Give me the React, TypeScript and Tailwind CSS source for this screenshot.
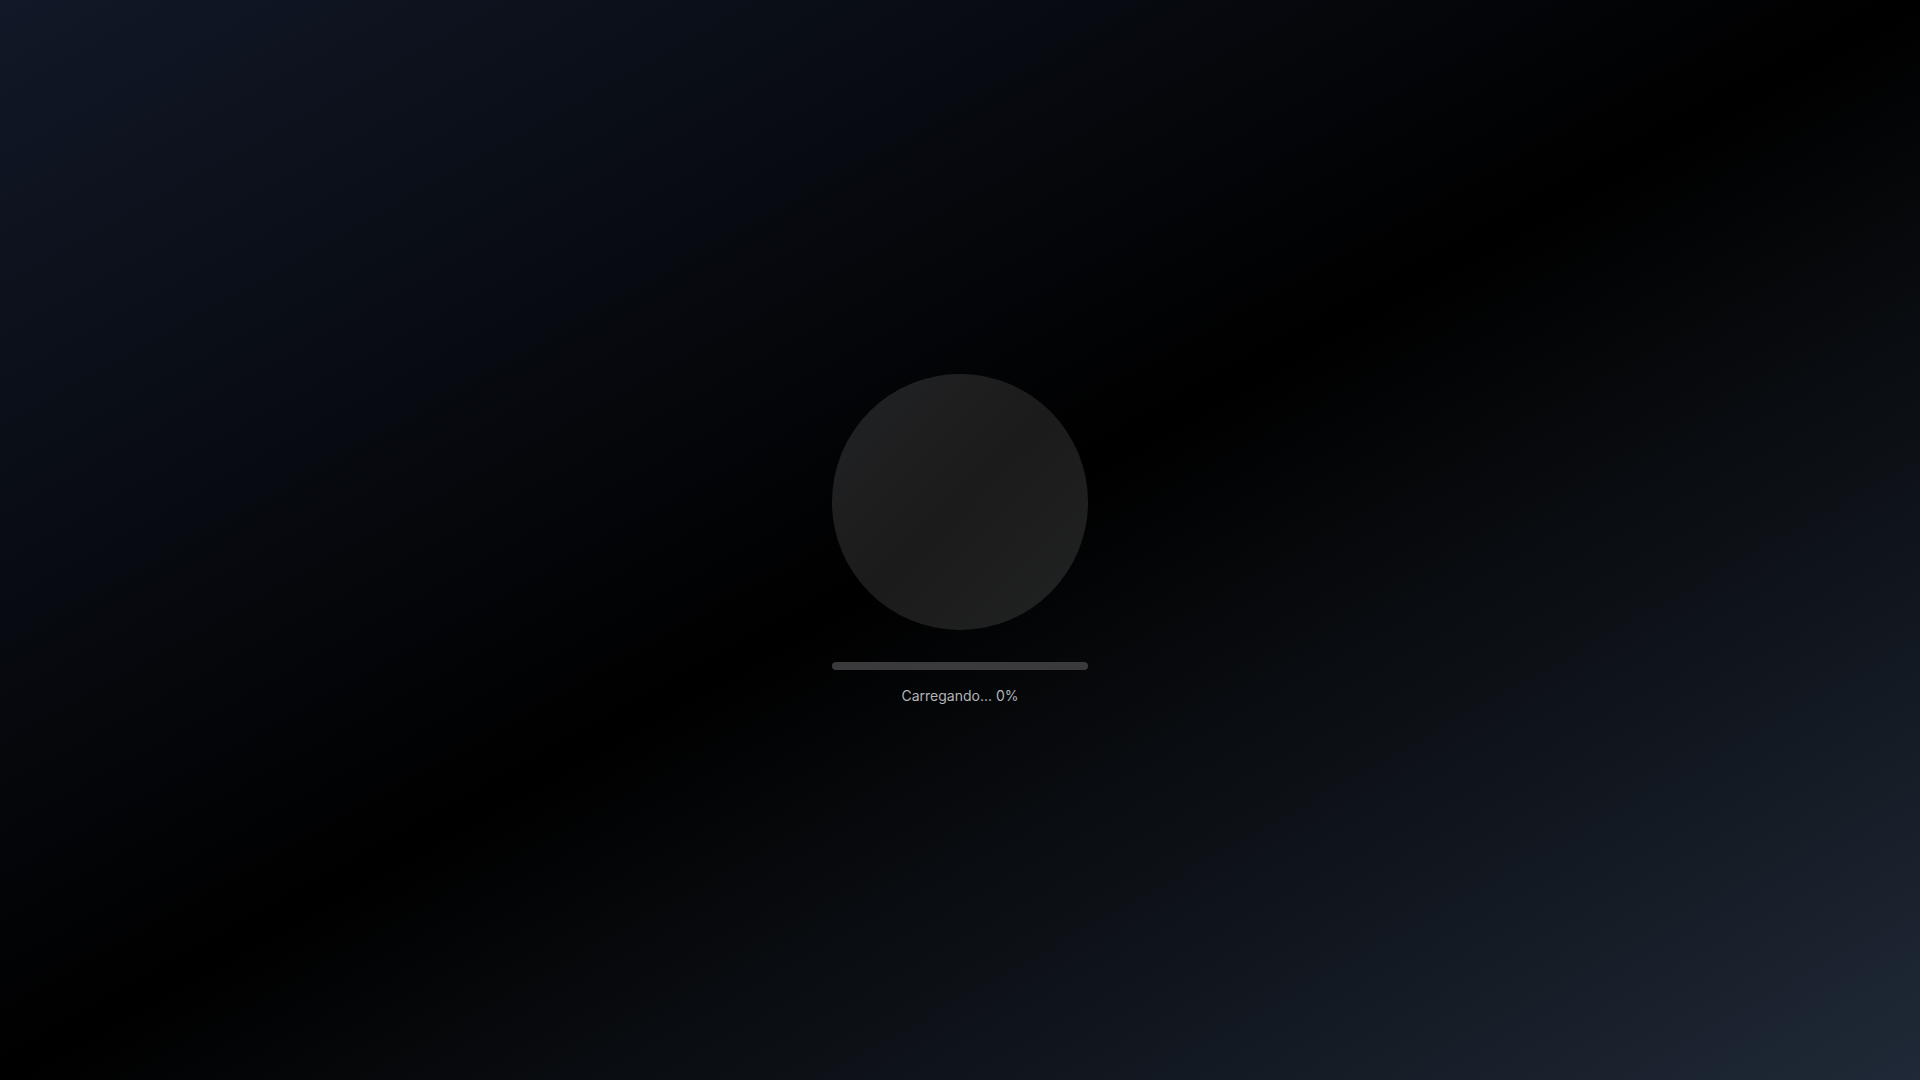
export default function App() {
  const progress = 0

  return (
    <div className="min-h-screen w-full flex items-center justify-center bg-[linear-gradient(to_bottom_right,#111827,#000000,#1f2937)] font-['Inter',sans-serif]">
      <div className="flex flex-col items-center">
        <div className="w-64 h-64 rounded-full bg-[linear-gradient(to_bottom_right,#222325,#1b1b1b,#212223)]" />
        <div className="mt-8 w-64 h-2 rounded-full bg-[#3a3a3c] overflow-hidden">
          <div className="h-full bg-white" style={{ width: `${progress}%` }} />
        </div>
        <p className="mt-4 text-sm text-[#b4b4b8]">Carregando... {progress}%</p>
      </div>
    </div>
  )
}
